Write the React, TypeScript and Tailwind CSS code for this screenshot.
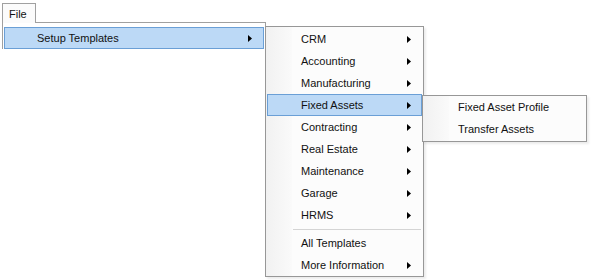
import React from 'react';

const font = { fontFamily: '"Liberation Sans", Arial, sans-serif' };

const Arrow = () => (
  <svg width="4" height="7" viewBox="0 0 4 7" className="shrink-0">
    <path d="M0 0 L4 3.5 L0 7 Z" fill="#000" />
  </svg>
);

interface RowProps {
  label: string;
  sub?: boolean;
  active?: boolean;
  textLeft: string;
  arrowRight: string;
}

const Row: React.FC<RowProps> = ({ label, sub, active, textLeft, arrowRight }) => (
  <div
    className={`flex items-center h-[22px] mx-[1px] border ${
      active ? 'bg-[#bcd9f6] border-[#6a9fd6]' : 'border-transparent'
    }`}
  >
    <span className={`${textLeft} flex-1 text-[11px] text-[#111]`}>{label}</span>
    {sub && <span className={arrowRight}><Arrow /></span>}
  </div>
);

const second = [
  { label: 'CRM', sub: true },
  { label: 'Accounting', sub: true },
  { label: 'Manufacturing', sub: true },
  { label: 'Fixed Assets', sub: true, active: true },
  { label: 'Contracting', sub: true },
  { label: 'Real Estate', sub: true },
  { label: 'Maintenance', sub: true },
  { label: 'Garage', sub: true },
  { label: 'HRMS', sub: true },
];

export default function App() {
  return (
    <div className="relative w-[607px] h-[280px] bg-white overflow-hidden" style={font}>
      {/* File tab */}
      <div className="absolute left-[2px] top-[3px] w-[34px] h-[20px] border border-b-0 border-[#a0a0a0] bg-[#fbfbfb] z-20">
        <span className="block pl-[6px] pt-[2px] text-[11px] text-[#111]">File</span>
      </div>

      {/* File menu */}
      <div className="absolute left-[2px] top-[22px] w-[264px] h-[27px] border border-b-0 border-[#a0a0a0] bg-white pt-[4px] z-10">
        <Row label="Setup Templates" sub active textLeft="pl-[32px]" arrowRight="pr-[11px]" />
      </div>

      {/* Setup Templates submenu */}
      <div className="absolute left-[265px] top-[26px] w-[159px] h-[251px] border border-[#979797] bg-[#fcfcfc] pt-[1px] shadow-[2px_2px_2px_rgba(0,0,0,0.08)] z-20">
        <div className="absolute left-0 top-0 bottom-0 w-[26px] bg-gradient-to-r from-[#f1f1f1] to-[#fafafa]" />
        <div className="relative">
          {second.map((r) => (
            <Row key={r.label} {...r} textLeft="pl-[33px]" arrowRight="pr-[10px]" />
          ))}
          <div className="h-[6px] flex items-center pl-[27px] pr-[2px]">
            <div className="h-px w-full bg-[#d4d4d4]" />
          </div>
          <Row label="All Templates" textLeft="pl-[33px]" arrowRight="pr-[10px]" />
          <Row label="More Information" sub textLeft="pl-[33px]" arrowRight="pr-[10px]" />
        </div>
      </div>

      {/* Fixed Assets submenu */}
      <div className="absolute left-[422px] top-[95px] w-[165px] h-[47px] border border-[#979797] bg-[#fcfcfc] pt-0 shadow-[2px_2px_2px_rgba(0,0,0,0.08)] z-30">
        <div className="absolute left-0 top-0 bottom-0 w-[26px] bg-gradient-to-r from-[#f1f1f1] to-[#fafafa]" />
        <div className="relative">
          <Row label="Fixed Asset Profile" textLeft="pl-[33px]" arrowRight="" />
          <Row label="Transfer Assets" textLeft="pl-[33px]" arrowRight="" />
        </div>
      </div>
    </div>
  );
}
